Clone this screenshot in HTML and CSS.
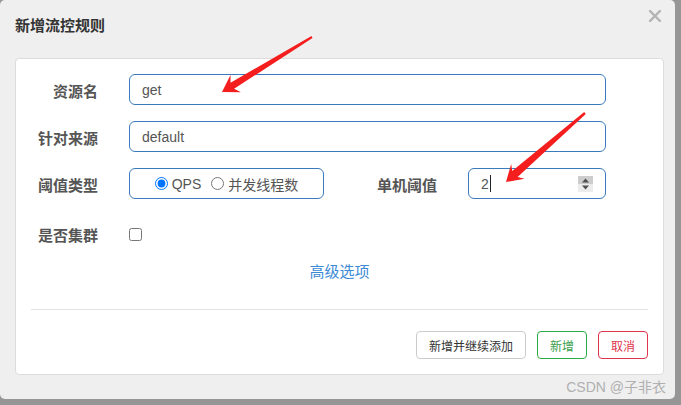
FILE: index.html
```
<!DOCTYPE html>
<html lang="zh-CN">
<head>
    <meta charset="UTF-8">
    <title>新增流控规则</title>
    <link rel="stylesheet" href="styles.css">
</head>
<body>

    <div class="dialog">
        <div class="dialog-head">
            <h4 class="title">新增流控规则</h4>
            <button class="close" type="button">
                <svg width="12" height="12" viewBox="0 0 12 12"><path d="M1 1L11 11M11 1L1 11" stroke="#b4b4b4" stroke-width="2.4" stroke-linecap="square"/></svg>
            </button>
        </div>

        <div class="panel">
            <div class="form-row">
                <label class="label">资源名</label>
                <input class="form-control wide" type="text" value="get">
            </div>
            <div class="form-row">
                <label class="label">针对来源</label>
                <input class="form-control wide" type="text" value="default">
            </div>
            <div class="form-row">
                <label class="label">阈值类型</label>
                <div class="form-control radios">
                    <label class="radio"><input type="radio" name="grade" checked>QPS</label>
                    <label class="radio"><input type="radio" name="grade">并发线程数</label>
                </div>
                <label class="label label-count">单机阈值</label>
                <div class="form-control number">
                    <span>2</span><i class="caret"></i>
                    <span class="spin">
                        <svg width="15" height="16" viewBox="0 0 15 16">
                            <rect width="15" height="8" fill="#cdcdcd"/>
                            <rect y="8" width="15" height="8" fill="#ececec"/>
                            <path d="M4 6.5L7.5 2.5L11 6.5Z" fill="#505050"/>
                            <path d="M4 9.5L7.5 13.5L11 9.5Z" fill="#505050"/>
                        </svg>
                    </span>
                </div>
            </div>
            <div class="form-row cluster">
                <label class="label">是否集群</label>
                <input class="check" type="checkbox">
            </div>

            <div class="advanced"><a href="#">高级选项</a></div>

            <hr class="divider">

            <div class="actions">
                <button class="btn" type="button">新增并继续添加</button>
                <button class="btn btn-ok" type="button">新增</button>
                <button class="btn btn-cancel" type="button">取消</button>
            </div>
        </div>

        <div class="watermark">CSDN @子非衣</div>
    </div>

    <!-- annotation arrows drawn over the screenshot -->
    <svg class="arrows" width="681" height="405" viewBox="0 0 681 405">
        <polygon points="311.5,36.1 230.5,82.8 230.5,75.1 222,92 240.9,92.3 234.1,88.8 312.5,37.9" fill="#f41e1e"/>
        <polygon points="584.2,112.1 512.2,171.0 511.2,163.9 506,182 524.6,178.8 517.6,177.0 585.8,113.9" fill="#f41e1e"/>
    </svg>

</body>
</html>
```

FILE: styles.css
```
body {
    margin: 0;
    width: 681px;
    height: 405px;
    background-color: #969696;
    font-family: "Liberation Sans", "Noto Sans CJK SC", sans-serif;
    position: relative;
    overflow: hidden;
}

/* Dialog */
.dialog {
    width: 675px;
    height: 399px;
    background-color: #efefef;
    border-radius: 5px;
}

.dialog-head {
    height: 58px;
    display: flex;
    justify-content: space-between;
    align-items: flex-start;
    padding: 0 14px 0 15px;
    box-sizing: border-box;
}

.title {
    margin: 16px 0 0;
    font-size: 15px;
    line-height: 20px;
    font-weight: bold;
    color: #333;
}

.close {
    margin-top: 10px;
    padding: 0;
    border: none;
    background: none;
    width: 12px;
    height: 12px;
    display: flex;
}

/* Panel */
.panel {
    margin-left: 15px;
    width: 649px;
    box-sizing: border-box;
    background: #fff;
    border: 1px solid #dcdcdc;
    border-radius: 4px;
    padding: 15px 15px 15px;
}

.form-row {
    display: flex;
    align-items: center;
    height: 31px;
    margin-bottom: 16px;
}

.form-row.cluster {
    margin-top: 19px;
    margin-bottom: 0;
}

.label {
    width: 67px;
    margin-right: 31px;
    text-align: right;
    font-size: 15px;
    font-weight: bold;
    color: #555;
    padding-top: 1px;
}

.label-count {
    width: 113px;
}

.form-control {
    height: 31px;
    box-sizing: border-box;
    border: 1px solid #3b7bbd;
    border-radius: 6px;
    padding: 0 12px;
    font-family: "Liberation Sans", "Noto Sans CJK SC", sans-serif;
    font-size: 14px;
    color: #555;
    background: #fff;
    outline: none;
}

.wide {
    width: 477px;
}

.radios {
    width: 195px;
    display: flex;
    align-items: center;
    justify-content: center;
    gap: 10px;
    padding: 0;
}

.radio {
    display: flex;
    align-items: center;
    color: #555;
}

.radio input {
    margin: 0 4px 0 0;
    width: 13px;
    height: 13px;
}

.number {
    width: 138px;
    display: flex;
    align-items: center;
}

.caret {
    display: inline-block;
    width: 1px;
    height: 17px;
    background: #222;
    margin-left: 1px;
}

.spin {
    margin-left: auto;
    display: flex;
}

.check {
    margin: 1px 0 0;
    width: 13px;
    height: 13px;
}

.advanced {
    margin-top: 13px;
    text-align: center;
    font-size: 15px;
    line-height: 20px;
}

.advanced a {
    color: #3b8ad6;
    text-decoration: none;
}

.divider {
    margin: 27px 0 21px;
    border: none;
    border-top: 1px solid #e3e3e3;
}

.actions {
    display: flex;
    justify-content: flex-end;
    gap: 11px;
}

.btn {
    height: 28px;
    padding: 0 12px;
    font-family: "Liberation Sans", "Noto Sans CJK SC", sans-serif;
    font-size: 12px;
    background: #fff;
    color: #333;
    border: 1px solid #ccc;
    border-radius: 4px;
}

.btn-ok {
    color: #3a9e4a;
    border-color: #2eab45;
}

.btn-cancel {
    color: #e0344c;
    border-color: #e0344c;
}

.watermark {
    height: 24px;
    line-height: 24px;
    text-align: right;
    padding-right: 9px;
    font-size: 14px;
    color: #b0b0b0;
}

/* Arrows */
.arrows {
    position: absolute;
    top: 0;
    left: 0;
    pointer-events: none;
}
```
